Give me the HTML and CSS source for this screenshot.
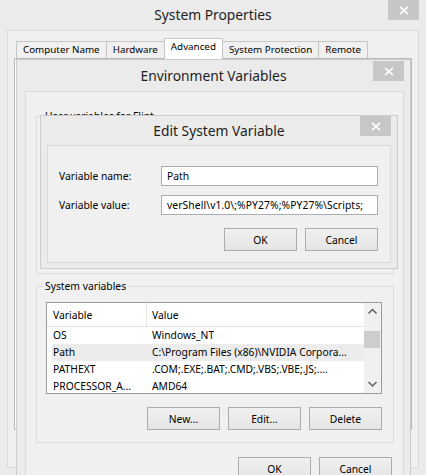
FILE: index.html
```html
<!DOCTYPE html>
<html>
<head>
<meta charset="utf-8">
<title>System Properties</title>
<link rel="stylesheet" href="styles.css">
</head>
<body>
<div class="win sys">
  <div class="titlebar sys-titlebar">
    <span class="title">System Properties</span>
    <span class="close"><svg width="10" height="9" viewBox="0 0 10 9"><path d="M1 0.8 L9 8.2 M9 0.8 L1 8.2" stroke="#fff" stroke-width="1.6" fill="none"/></svg></span>
  </div>
  <div class="client sys-client">
    <div class="tabs">
      <div class="tab">Computer Name</div>
      <div class="tab">Hardware</div>
      <div class="tab tab-active">Advanced</div>
      <div class="tab">System Protection</div>
      <div class="tab">Remote</div>
    </div>
    <div class="tab-panel"></div>
  </div>
</div>

<div class="win env">
  <div class="titlebar env-titlebar">
    <span class="title">Environment Variables</span>
    <span class="close"><svg width="10" height="9" viewBox="0 0 10 9"><path d="M1 0.8 L9 8.2 M9 0.8 L1 8.2" stroke="#fff" stroke-width="1.6" fill="none"/></svg></span>
  </div>
  <div class="client env-client">
    <div class="group user-group">
      <span class="group-label">User variables for Flint</span>
    </div>
    <div class="group sys-group">
      <span class="group-label">System variables</span>
      <div class="list">
        <div class="list-main">
          <div class="list-head">
            <span class="head-c1">Variable</span>
            <span class="head-c2">Value</span>
          </div>
          <div class="row"><span class="c1">OS</span><span class="c2">Windows_NT</span></div>
          <div class="row row-sel"><span class="c1">Path</span><span class="c2">C:\Program Files (x86)\NVIDIA Corpora...</span></div>
          <div class="row"><span class="c1">PATHEXT</span><span class="c2">.COM;.EXE;.BAT;.CMD;.VBS;.VBE;.JS;....</span></div>
          <div class="row"><span class="c1">PROCESSOR_A...</span><span class="c2">AMD64</span></div>
        </div>
        <div class="vscroll">
          <svg class="arrow" width="17" height="17" viewBox="0 0 17 17"><polyline points="4.5,10.5 8.5,6.5 12.5,10.5" stroke="#606060" stroke-width="1.5" fill="none"/></svg>
          <div class="track"><div class="thumb"></div></div>
          <svg class="arrow" width="17" height="17" viewBox="0 0 17 17"><polyline points="4.5,6 8.5,10 12.5,6" stroke="#606060" stroke-width="1.5" fill="none"/></svg>
        </div>
      </div>
      <div class="btn-row">
        <button class="btn">New...</button>
        <button class="btn">Edit...</button>
        <button class="btn">Delete</button>
      </div>
    </div>
    <div class="dlg-buttons">
      <button class="btn">OK</button>
      <button class="btn">Cancel</button>
    </div>
  </div>
</div>

<div class="win edit">
  <div class="titlebar edit-titlebar">
    <span class="title">Edit System Variable</span>
    <span class="close"><svg width="10" height="9" viewBox="0 0 10 9"><path d="M1 0.8 L9 8.2 M9 0.8 L1 8.2" stroke="#fff" stroke-width="1.6" fill="none"/></svg></span>
  </div>
  <div class="client edit-client">
    <div class="field field-1">
      <span class="field-label">Variable name:</span>
      <div class="input">Path</div>
    </div>
    <div class="field field-2">
      <span class="field-label">Variable value:</span>
      <div class="input input-value">verShell\v1.0\;%PY27%;%PY27%\Scripts;</div>
    </div>
    <div class="edit-buttons">
      <button class="btn">OK</button>
      <button class="btn">Cancel</button>
    </div>
  </div>
</div>
</body>
</html>
```
FILE: styles.css
```css
* { box-sizing: border-box; }
html, body { margin: 0; padding: 0; }
body {
  width: 426px;
  height: 475px;
  overflow: hidden;
  position: relative;
  background: #ebebeb;
  font-family: "Noto Sans", "Open Sans", sans-serif;
  font-size: 10.3px;
  color: #000;
}
.win {
  background: #ebebeb;
  display: flex;
  flex-direction: column;
}
.sys { width: 426px; height: 475px; }
.env, .edit {
  position: absolute;
  border: 1px solid #cbcbcb;
}
.env { left: 16px; top: 59px; width: 395px; height: 430px; }
.edit { left: 40px; top: 115px; width: 358px; height: 154px; }

.titlebar {
  display: grid;
  grid-template-columns: 1fr auto 1fr;
  align-items: center;
  flex: none;
}
.title {
  grid-column: 2;
  font-size: 13.8px;
  color: #1e1e1e;
  white-space: nowrap;
  line-height: 18px;
}
.close {
  grid-column: 3;
  justify-self: end;
  align-self: start;
  width: 31px;
  height: 20px;
  background: #c7c7c7;
  display: flex;
  align-items: center;
  justify-content: center;
}
.sys-titlebar { height: 30px; padding: 0 7px; }
.env-titlebar { height: 31px; padding: 0 6px; }
.env-titlebar .close { margin-top: 1px; }
.edit-titlebar { height: 29px; padding: 0 6px; }

.client {
  background: #f0f0f0;
  border: 1px solid #dadada;
}
.sys-client { margin: 0 7px 7px; flex: 1; }

.tabs {
  display: flex;
  align-items: flex-end;
  height: 17px;
  margin: 10px 0 0 8px;
  position: relative;
  z-index: 1;
  font-size: 9.8px;
}
.tab {
  height: 17px;
  padding: 0 6px;
  margin-right: -1px;
  border: 1px solid #c5c5c5;
  border-bottom: none;
  background: #f0f0f0;
  line-height: 16px;
  white-space: nowrap;
}
.tab-active {
  height: 21px;
  margin-bottom: -1px;
  background: #fff;
  line-height: 16px;
  padding-bottom: 3px;
  position: relative;
  z-index: 2;
}
.tab-panel {
  margin-left: 6px;
  width: 398px;
  height: 372px;
  background: #fff;
  border: 1px solid #b9b9b9;
}

.env-client {
  margin: 0 6px 0 8px;
  flex: 1;
  display: flex;
  flex-direction: column;
}
.group {
  flex: none;
  border: 1px solid #dcdcdc;
  margin-left: 10px;
  width: 358px;
  display: flex;
  flex-direction: column;
}
.user-group { margin-top: 24px; height: 158px; }
.sys-group { margin-top: 12px; height: 157px; }
.group-label {
  align-self: flex-start;
  margin: -8px 0 0 6px;
  padding: 0 2px;
  background: #f0f0f0;
  line-height: 15px;
  white-space: nowrap;
}

.list {
  margin: 8px 0 0 9px;
  width: 336px;
  height: 92px;
  border: 1px solid #9a9a9a;
  background: #fff;
  display: flex;
}
.list-main { flex: 1; overflow: hidden; }
.list-head {
  display: flex;
  height: 24px;
  border-bottom: 1px solid #e5e5e5;
}
.head-c1 {
  width: 100px;
  padding-left: 6px;
  border-right: 1px solid #e5e5e5;
  display: flex;
  align-items: center;
}
.head-c2 {
  padding-left: 5px;
  display: flex;
  align-items: center;
}
.row {
  display: flex;
  height: 17px;
  line-height: 17px;
  margin-left: 5px;
  white-space: nowrap;
}
.row-sel { background: #ececec; }
.c1 { width: 100px; padding-left: 1px; flex: none; overflow: hidden; }
.c2 { overflow: hidden; }

.vscroll {
  width: 17px;
  flex: none;
  background: #f0f0f0;
  display: flex;
  flex-direction: column;
}
.arrow { display: block; flex: none; }
.track { flex: 1; }
.thumb {
  margin: 11px 1px 0 0;
  height: 17px;
  background: #cdcdcd;
}

.btn {
  width: 73px;
  height: 23px;
  padding: 0;
  border: 1px solid #acacac;
  background: linear-gradient(#f0f0f0, #e5e5e5);
  font: inherit;
  color: #000;
}
.btn-row {
  margin-top: 13px;
  padding-right: 11px;
  display: flex;
  justify-content: flex-end;
  gap: 8px;
}
.dlg-buttons {
  margin-top: 14px;
  padding-right: 11px;
  display: flex;
  justify-content: flex-end;
  gap: 8px;
}

.edit-client {
  margin: 0 6px 5px;
  flex: 1;
  display: flex;
  flex-direction: column;
  padding: 0 12px 0 11px;
}
.field { display: flex; align-items: center; }
.field-1 { margin-top: 20px; }
.field-2 { margin-top: 9px; }
.field-label { width: 102px; flex: none; white-space: nowrap; }
.input {
  width: 219px;
  height: 20px;
  border: 1px solid #abadb3;
  background: #fff;
  padding-left: 5px;
  line-height: 18px;
  white-space: nowrap;
  overflow: hidden;
}
.input-value { letter-spacing: 0.1px; }
.edit-buttons {
  margin-top: 13px;
  display: flex;
  justify-content: flex-end;
  gap: 8px;
}
```
